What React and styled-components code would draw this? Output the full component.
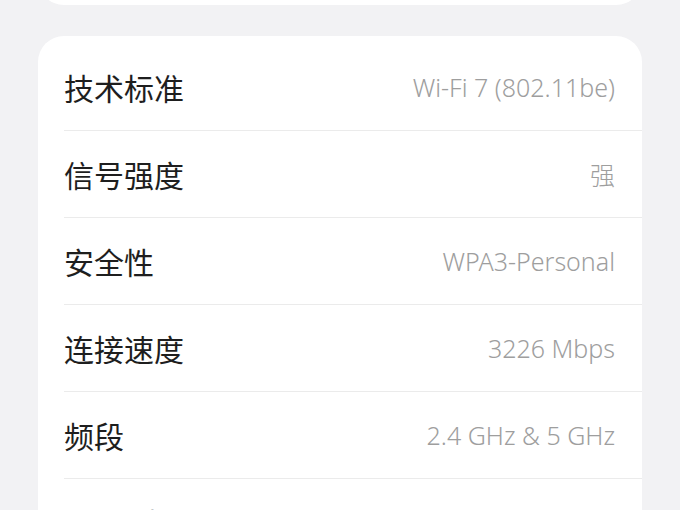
import styled, { createGlobalStyle } from "styled-components";

const GlobalStyle = createGlobalStyle`
  html, body {
    margin: 0;
    padding: 0;
    background: #f2f2f4;
    overflow: hidden;
  }
`;

const Page = styled.div`
  width: 680px;
  height: 510px;
  padding: 0 38px;
  box-sizing: border-box;
  overflow: hidden;
  font-family: "Noto Sans", "Noto Sans CJK SC", sans-serif;
`;

const Card = styled.div`
  background: #ffffff;
  border-radius: 26px;
`;

// previous section, scrolled almost out of view
const PrevCard = styled(Card)`
  height: 80px;
  margin-top: -75px;
`;

const InfoCard = styled(Card)`
  margin-top: 31px;
  padding: 8px 0 0 26px;
`;

const Row = styled.div`
  display: flex;
  align-items: center;
  justify-content: space-between;
  height: 86px;
  padding-right: 27px;
  border-bottom: 1px solid #ebebeb;
`;

const Label = styled.span`
  font-family: "Noto Sans CJK SC", sans-serif;
  font-size: 30px;
  font-weight: 400;
  color: #1e1e1e;
`;

const Value = styled.span`
  font-family: "Noto Sans", "Noto Sans CJK SC", sans-serif;
  font-size: 25px;
  font-weight: 300;
  color: #9e9e9e;
`;

const rows = [
  ["技术标准", "Wi-Fi 7 (802.11be)"],
  ["信号强度", "强"],
  ["安全性", "WPA3-Personal"],
  ["连接速度", "3226 Mbps"],
  ["频段", "2.4 GHz & 5 GHz"],
  ["MAC 地址", ""],
];

export default function App() {
  return (
    <>
      <GlobalStyle />
      <Page>
        <PrevCard />
        <InfoCard>
          {rows.map(([label, value]) => (
            <Row key={label}>
              <Label>{label}</Label>
              {value && <Value>{value}</Value>}
            </Row>
          ))}
        </InfoCard>
      </Page>
    </>
  );
}
